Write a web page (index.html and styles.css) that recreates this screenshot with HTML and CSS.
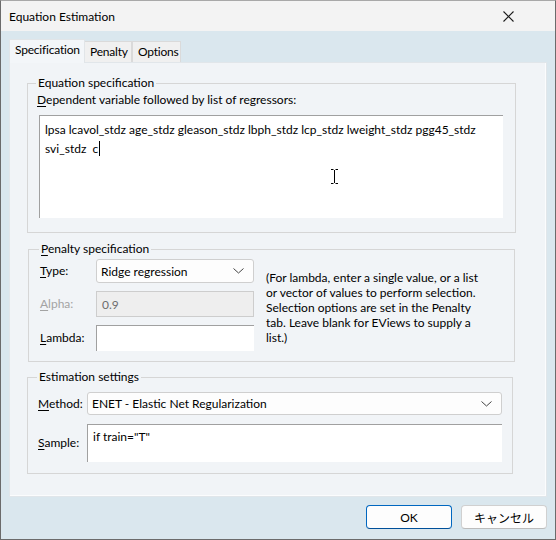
FILE: index.html
```html
<!DOCTYPE html>
<html lang="en">
<head>
    <meta charset="UTF-8">
    <title>Equation Estimation</title>
    <link rel="stylesheet" href="styles.css">
</head>
<body>
    <div class="window">
        <div class="titlebar">
            <span class="title">Equation Estimation</span>
            <svg class="close" width="11" height="11" viewBox="0 0 11 11">
                <path d="M0.5 0.5 L10.5 10.5 M10.5 0.5 L0.5 10.5" stroke="#1a1a1a" stroke-width="1.1" fill="none"/>
            </svg>
        </div>

        <div class="client">
            <div class="tabs">
                <div class="tab tab-active">Specification</div>
                <div class="tab tab-penalty">Penalty</div>
                <div class="tab tab-options">Options</div>
            </div>

            <div class="panel">
                <!-- Equation specification -->
                <fieldset class="group group-eq">
                    <legend>Equation specification</legend>
                    <div class="hint"><u>D</u>ependent variable followed by list of regressors:</div>
                    <div class="edit edit-eq">
                        <div>lpsa lcavol_stdz age_stdz gleason_stdz lbph_stdz lcp_stdz lweight_stdz pgg45_stdz</div>
                        <div>svi_stdz&nbsp; c<span class="caret"></span></div>
                        <svg class="ibeam" width="7" height="15" viewBox="0 0 7 15">
                            <path d="M0 0.5 H2.5 M4.5 0.5 H7 M3.5 1 V14 M0 14.5 H2.5 M4.5 14.5 H7" stroke="#000" stroke-width="1" fill="none"/>
                        </svg>
                    </div>
                </fieldset>

                <!-- Penalty specification -->
                <fieldset class="group group-pen">
                    <legend><u>P</u>enalty specification</legend>
                    <div class="pen-grid">
                        <label class="lbl"><u>T</u>ype:</label>
                        <div class="combo combo-type">
                            <span>Ridge regression</span>
                            <svg width="11" height="6" viewBox="0 0 11 6"><path d="M0.5 0.5 L5.5 5 L10.5 0.5" stroke="#444" stroke-width="1" fill="none"/></svg>
                        </div>
                        <div class="note">(For lambda, enter a single value, or a list or vector of values to perform selection. Selection options are set in the Penalty tab. Leave blank for EViews to supply a list.)</div>

                        <label class="lbl lbl-disabled"><u>A</u>lpha:</label>
                        <div class="field field-disabled">0.9</div>

                        <label class="lbl"><u>L</u>ambda:</label>
                        <div class="edit edit-lambda"></div>
                    </div>
                </fieldset>

                <!-- Estimation settings -->
                <fieldset class="group group-est">
                    <legend>Estimation settings</legend>
                    <div class="est-grid">
                        <label class="lbl"><u>M</u>ethod:</label>
                        <div class="combo combo-method">
                            <span>ENET - Elastic Net Regularization</span>
                            <svg width="11" height="6" viewBox="0 0 11 6"><path d="M0.5 0.5 L5.5 5 L10.5 0.5" stroke="#444" stroke-width="1" fill="none"/></svg>
                        </div>

                        <label class="lbl"><u>S</u>ample:</label>
                        <div class="edit edit-sample">if train="T"</div>
                    </div>
                </fieldset>
            </div>

            <div class="buttons">
                <button class="btn btn-default">OK</button>
                <button class="btn">キャンセル</button>
            </div>
        </div>
    </div>
</body>
</html>
```

FILE: styles.css
```css
/* General Styling */
body {
    margin: 0;
    font-family: "Lato", "Noto Sans CJK JP", sans-serif;
    font-size: 12px;
    color: #000;
    background-color: #dae7ee;
}

.window {
    width: 556px;
    height: 540px;
    box-sizing: border-box;
    border: 1px solid #6b6b6b;
    border-top-color: #a8a8a8;
    display: flex;
    flex-direction: column;
    background-color: #dae7ee;
}

.titlebar {
    height: 30px;
    background-color: #f3f3f3;
    display: flex;
    align-items: center;
    justify-content: space-between;
    padding: 0 41px 0 8px;
}

.close {
    display: block;
}

.client {
    flex: 1;
    padding: 8px 8px 0 8px;
    display: flex;
    flex-direction: column;
}

/* Tabs */
.tabs {
    display: flex;
    align-items: flex-end;
    height: 23px;
    position: relative;
    z-index: 1;
}

.tab {
    box-sizing: border-box;
    height: 21px;
    line-height: 20px;
    padding-left: 5px;
    background-color: #f0f0f0;
    border: 1px solid #dadada;
    border-bottom: none;
    color: #000;
    white-space: nowrap;
    letter-spacing: -0.2px;
}

.tab-active {
    width: 76px;
    height: 24px;
    margin-bottom: -1px;
    line-height: 19px;
    padding-left: 5px;
    background-color: #f3f6f9;
    border-color: #e1e5e8;
}

.tab-penalty {
    width: 47px;
    border-left: none;
}

.tab-options {
    width: 49px;
    border-left-color: #dadada;
}

.panel {
    box-sizing: border-box;
    height: 435px;
    background-color: #f1f4f7;
    border: 1px solid #e1e6ea;
    box-shadow: inset -1px -1px 0 #fbfcfd;
    padding: 12px 0 0 17px;
}

/* Group boxes */
.group {
    margin: 0;
    border: 1px solid #d6d6d6;
    padding: 0 0 0 9px;
    box-sizing: border-box;
}

.group legend {
    padding: 0 2px;
    margin-left: -1px;
    line-height: 16px;
}

u {
    text-decoration-thickness: 1px;
    text-underline-offset: 2px;
}

.group-eq {
    width: 489px;
    padding-top: 1px;
    padding-bottom: 14px;
}

.hint {
    line-height: 16px;
}

.edit {
    box-sizing: border-box;
    background-color: #fff;
    border-top: 1px solid #a0a0a0;
    border-left: 1px solid #a0a0a0;
}

.edit-eq {
    position: relative;
    width: 464px;
    height: 103px;
    margin: 7px 0 0 2px;
    padding: 4px 0 0 5px;
    line-height: 19px;
}

.caret {
    display: inline-block;
    width: 1px;
    height: 15px;
    background-color: #000;
    vertical-align: -3px;
    margin-left: 1px;
}

.ibeam {
    position: absolute;
    left: 291px;
    top: 53px;
}

.group-pen {
    width: 487px;
    margin: 8px 0 0 1px;
    padding: 2px 0 10px 11px;
}

.pen-grid {
    display: grid;
    grid-template-columns: 56px 158px 232px;
    grid-template-rows: 24px 26px 26px;
    row-gap: 8px;
    align-items: center;
}

.lbl {
    line-height: 16px;
}

.lbl-disabled {
    color: #a3a3a3;
}

.combo {
    box-sizing: border-box;
    height: 100%;
    display: flex;
    align-items: center;
    justify-content: space-between;
    background-color: #fdfdfd;
    border: 1px solid #cfcfcf;
    border-radius: 3px;
    padding: 0 9px 0 4px;
}

.field-disabled {
    box-sizing: border-box;
    height: 100%;
    display: flex;
    align-items: center;
    padding-left: 5px;
    background-color: #eeeeee;
    border: 1px solid #cdcdcd;
    color: #6d6d6d;
}

.edit-lambda {
    height: 100%;
}

.note {
    grid-column: 3;
    grid-row: 1 / 4;
    align-self: start;
    padding: 11px 0 0 12px;
    line-height: 15px;
}

.group-est {
    width: 486px;
    margin-top: 7px;
    padding: 7px 0 11px 10px;
}

.est-grid {
    display: grid;
    grid-template-columns: 49px 415px;
    grid-template-rows: 23px 38px;
    row-gap: 9px;
    align-items: center;
}

.edit-sample {
    height: 100%;
    padding: 4px 0 0 5px;
    line-height: 16px;
}

/* Buttons */
.buttons {
    display: flex;
    justify-content: flex-end;
    gap: 9px;
    margin-top: 8px;
}

.btn {
    box-sizing: border-box;
    width: 86px;
    height: 24px;
    font-family: "Lato", "Noto Sans CJK JP", sans-serif;
    font-size: 12px;
    color: #000;
    background-color: #fdfdfd;
    border: 1px solid #d0d0d0;
    border-bottom-color: #bcbcbc;
    border-radius: 4px;
    padding: 0;
}

.btn-default {
    border: 1px solid #0067c0;
    border-bottom-color: #00509a;
}
```
